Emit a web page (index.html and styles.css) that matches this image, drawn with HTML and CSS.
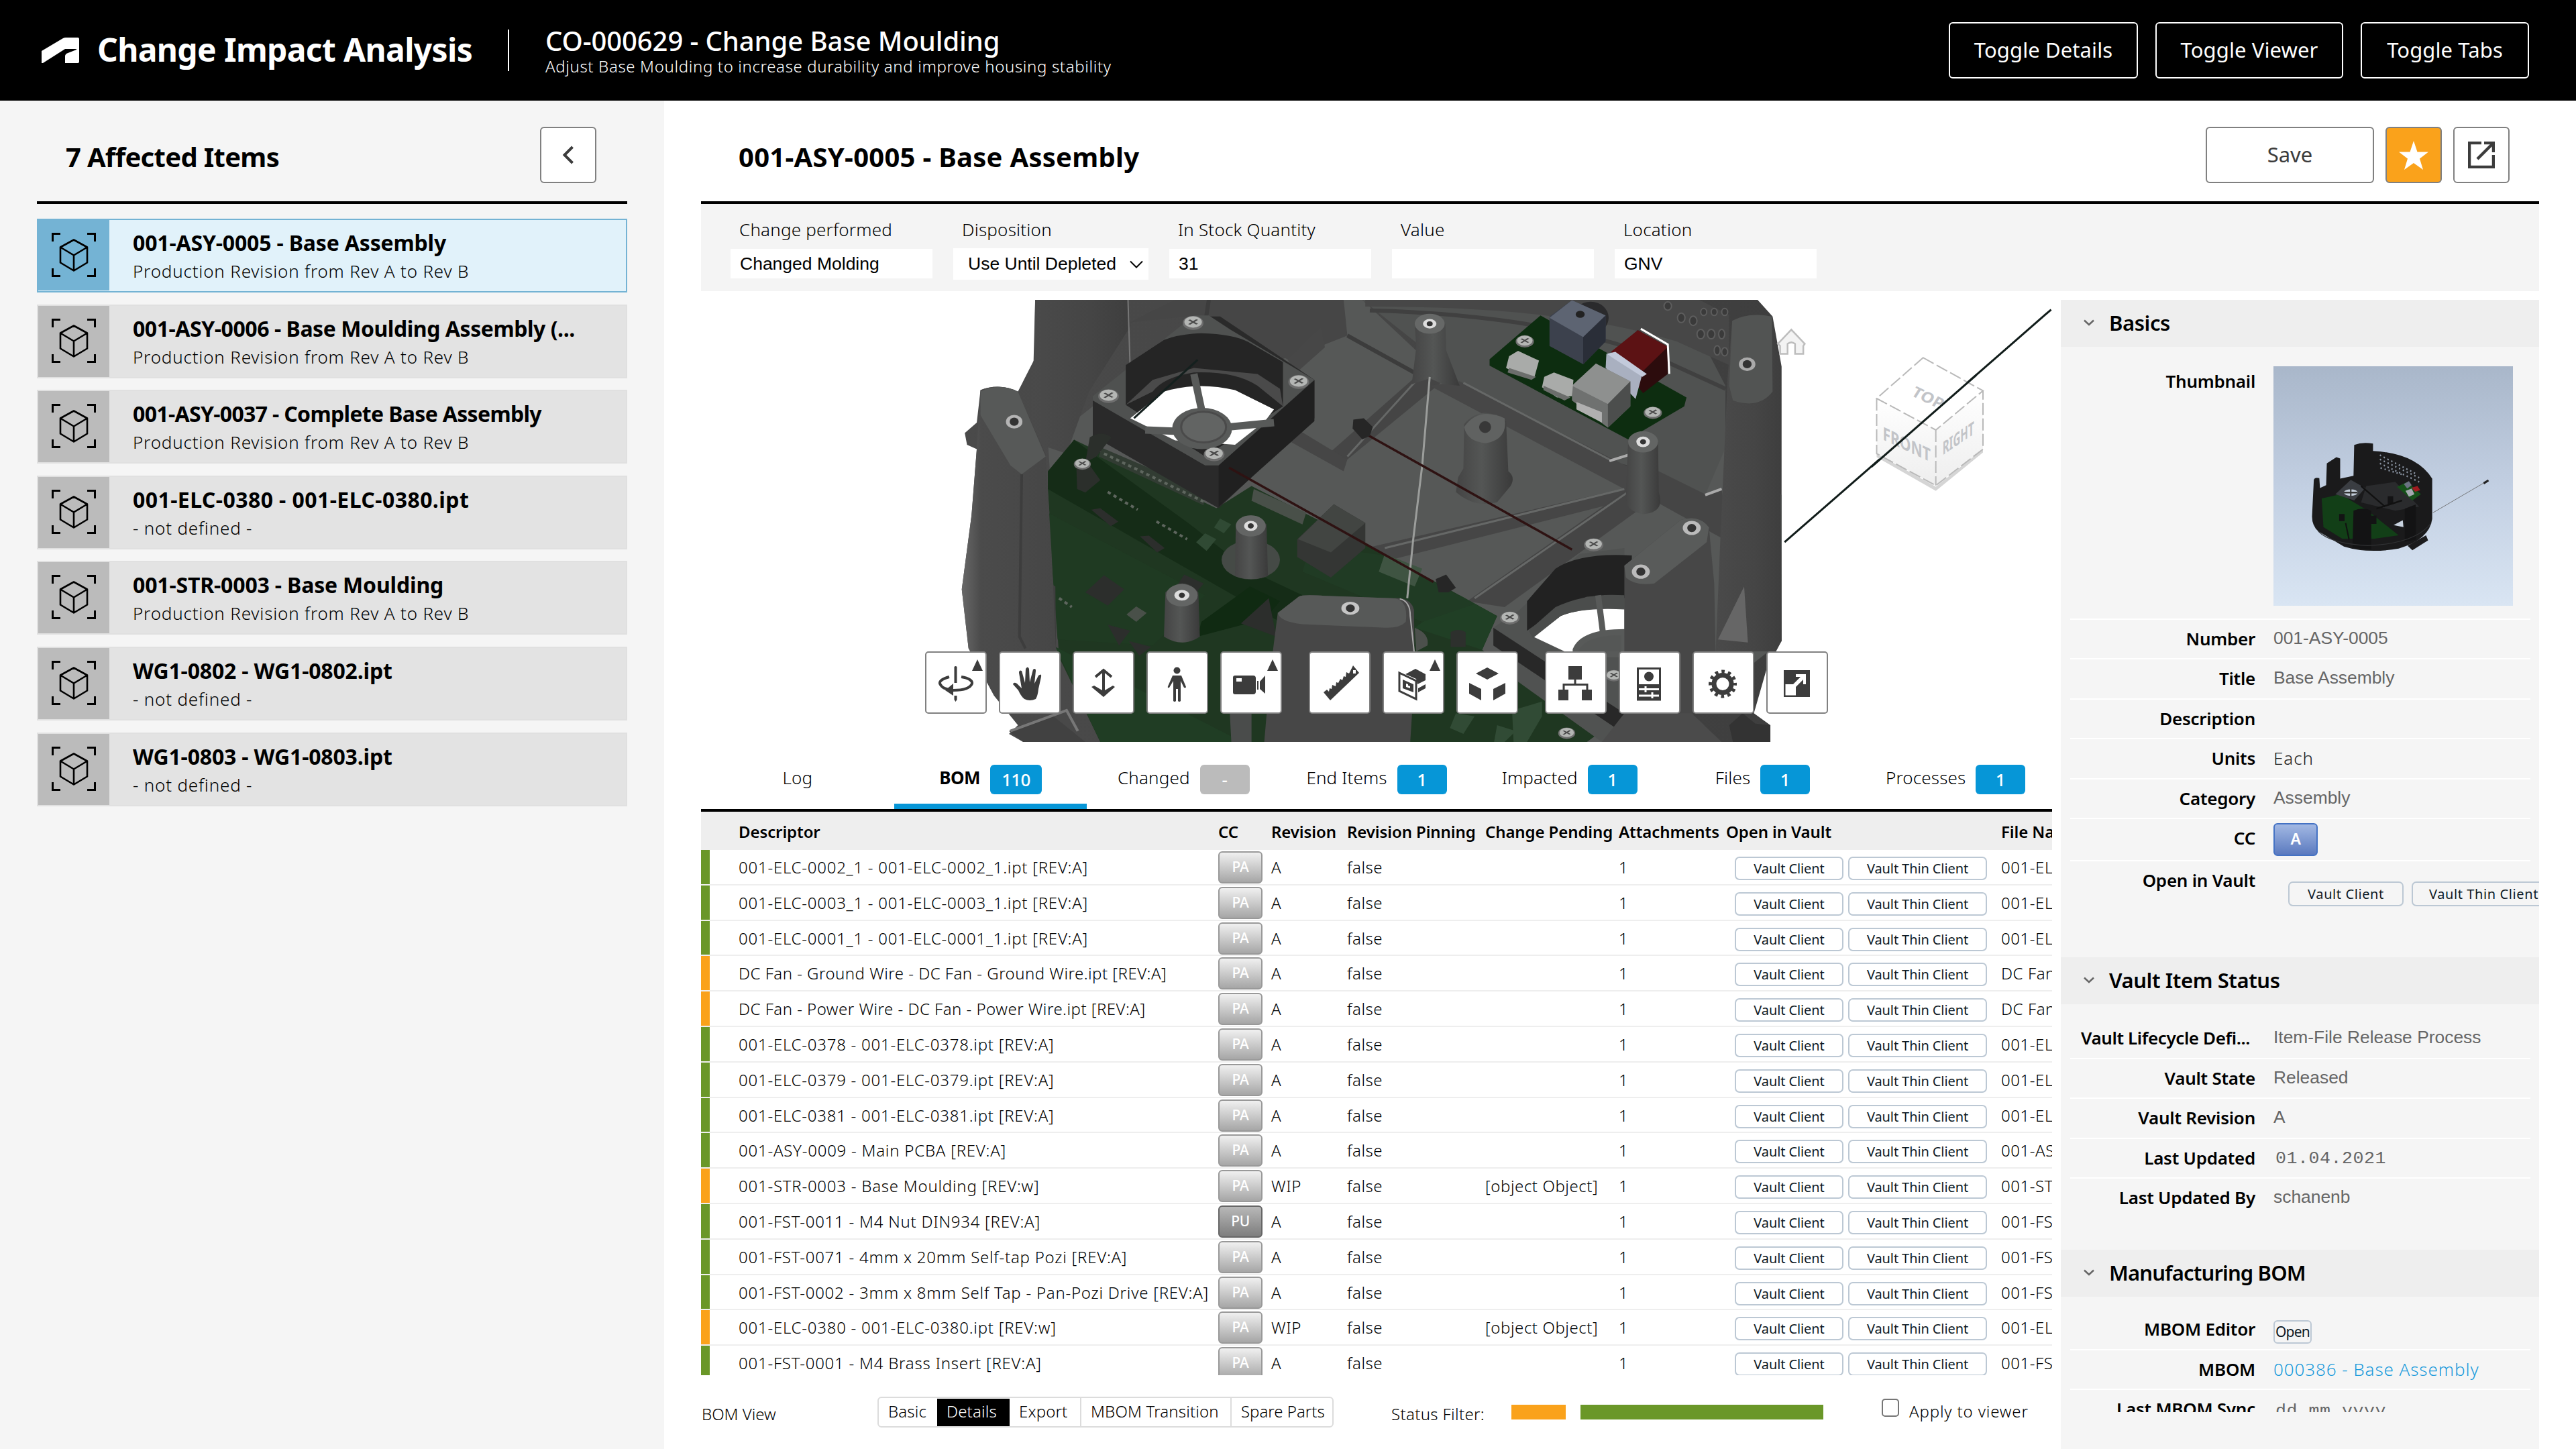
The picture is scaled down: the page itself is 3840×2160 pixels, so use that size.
FILE: index.html
```html
<!DOCTYPE html>
<html lang="en">
<head>
<meta charset="utf-8">
<title>Change Impact Analysis</title>
<link rel="stylesheet" href="styles.css">
</head>
<body>
<svg class="defs" aria-hidden="true">
  <symbol id="item" viewBox="0 0 66 66">
    <path d="M1.5 13V1.500H13M53 1.500H64.500V13M64.500 53V64.500H53M13 64.500H1.500V53" fill="none" stroke="#000" stroke-width="3"/>
    <path d="M33 10.500L53 21.500V44.500L33 56.500L13 44.500V21.500ZM13 21.500L33 33.500L53 21.500M33 33.500V56.500" fill="none" stroke="#000" stroke-width="2.600" stroke-linejoin="round"/>
  </symbol>
  <symbol id="chev" viewBox="0 0 16 10"><path d="M1 1.500L8 8L15 1.500" fill="none" stroke="#666" stroke-width="2.500"/></symbol>
  <symbol id="screw" viewBox="-16 -26 32 52">
    <ellipse rx="13" ry="22" cy="3" fill="#6e6e6e"/><ellipse rx="11" ry="18" fill="#b4b6b4"/><path d="M-5 -7L5 7M5 -8L-5 8" stroke="#4a4a4a" stroke-width="3"/>
  </symbol>
</svg>

<header class="topbar">
  <svg class="logo" viewBox="0 0 56 38"><path d="M0 20L32 1Q34 0 36 0H54Q56 0 56 2V36Q56 38 54 38H35V28Q35 25 38 23.500L52 18Q53 17 51 17H35L2 38H0Z" fill="#fff"/></svg>
  <h1>Change Impact Analysis</h1>
  <div class="order">
    <div class="order-title">CO-000629 - Change Base Moulding</div>
    <div class="order-sub">Adjust Base Moulding to increase durability and improve housing stability</div>
  </div>
  <button class="toggle t1">Toggle Details</button>
  <button class="toggle t2">Toggle Viewer</button>
  <button class="toggle t3">Toggle Tabs</button>
</header>

<div class="body">
<aside class="affected">
  <div class="panel-head">
    <h2 class="tight">7 Affected Items</h2>
    <button class="btn sq"><svg viewBox="0 0 18 28" width="18" height="28"><path d="M15.500 2L3.500 14L15.500 26" fill="none" stroke="#3c3c3c" stroke-width="4"/></svg></button>
  </div>
  <ul class="items">
    <li class="item selected"><span class="ico"><svg><use href="#item"/></svg></span><div><b>001-ASY-0005 - Base Assembly</b><small>Production Revision from Rev A to Rev B</small></div></li>
    <li class="item"><span class="ico"><svg><use href="#item"/></svg></span><div><b>001-ASY-0006 - Base Moulding Assembly (...</b><small>Production Revision from Rev A to Rev B</small></div></li>
    <li class="item"><span class="ico"><svg><use href="#item"/></svg></span><div><b>001-ASY-0037 - Complete Base Assembly</b><small>Production Revision from Rev A to Rev B</small></div></li>
    <li class="item"><span class="ico"><svg><use href="#item"/></svg></span><div><b>001-ELC-0380 - 001-ELC-0380.ipt</b><small>- not defined -</small></div></li>
    <li class="item"><span class="ico"><svg><use href="#item"/></svg></span><div><b>001-STR-0003 - Base Moulding</b><small>Production Revision from Rev A to Rev B</small></div></li>
    <li class="item"><span class="ico"><svg><use href="#item"/></svg></span><div><b>WG1-0802 - WG1-0802.ipt</b><small>- not defined -</small></div></li>
    <li class="item"><span class="ico"><svg><use href="#item"/></svg></span><div><b>WG1-0803 - WG1-0803.ipt</b><small>- not defined -</small></div></li>
  </ul>
</aside>

<main>
  <div class="panel-head wide">
    <h2>001-ASY-0005 - Base Assembly</h2>
    <button class="btn save">Save</button>
    <button class="btn sq star"><svg viewBox="0 0 44 43" width="44" height="43"><path d="M22 0L27.500 16.500H44L31 26.500L36 43L22 33L8 43L13 26.500L0 16.500H16.500Z" fill="#fff"/></svg></button>
    <button class="btn sq"><svg viewBox="0 0 40 40" width="40" height="40"><path d="M20 2H2V38H38V20" fill="none" stroke="#3c3c3c" stroke-width="4.500"/><path d="M24 2H38V16M38 2L14 26" fill="none" stroke="#3c3c3c" stroke-width="4.500"/></svg></button>
  </div>
  <div class="form">
    <div class="field"><label>Change performed</label><span class="input">Changed Molding</span></div>
    <div class="field sel"><label>Disposition</label><span class="input">Use Until Depleted<svg viewBox="0 0 20 12" width="20" height="12"><path d="M1 1.500L10 10.500L19 1.500" fill="none" stroke="#000" stroke-width="2"/></svg></span></div>
    <div class="field"><label>In Stock Quantity</label><span class="input">31</span></div>
    <div class="field"><label>Value</label><span class="input"></span></div>
    <div class="field"><label>Location</label><span class="input">GNV</span></div>
  </div>

  <div class="split">
  <section class="center">
    <div class="viewer">
      <svg class="scene" viewBox="-273.300 39 1804.600 1498" preserveAspectRatio="none">
        <defs>
          <linearGradient id="col" x1="0" x2="1"><stop offset="0" stop-color="#444"/><stop offset=".45" stop-color="#545655"/><stop offset="1" stop-color="#3a3a3a"/></linearGradient>
          <linearGradient id="lobe" x1="0" x2="1"><stop offset="0" stop-color="#686868"/><stop offset=".2" stop-color="#4b4b4b"/><stop offset="1" stop-color="#464646"/></linearGradient>
          <linearGradient id="wall" x1="0" x2="1"><stop offset="0" stop-color="#4a4a4a"/><stop offset=".6" stop-color="#454545"/><stop offset="1" stop-color="#3e3e3e"/></linearGradient>
          <linearGradient id="cube" x1="0" x2="0" y1="0" y2="1"><stop offset="0" stop-color="#fff"/><stop offset="1" stop-color="#ececec"/></linearGradient>
        </defs>
        <path d="M173 39H1138L1158 95L1170 265V1195L1150 1290L1133 1440L1155 1480V1537H157L138 1510L150 1480L118 1380L84 1220L75 1020L88 770L95 545L82 530L79 490L95 455L100 345Q125 320 150 350L172 240Z" fill="url(#wall)"/>
        <!-- floor of the moulding -->
        <path d="M360 39H610L690 230L740 330L940 585L968 680L1095 540L1170 700V1195L1000 1537H700L200 900L190 520L250 400L500 250L555 130L590 160Z" fill="#565857"/>
        <path d="M610 39H950L1040 60L1095 330V540L1068 700L1000 620L940 585L720 310L690 200Z" fill="#505251"/>
        <path d="M614 39H1060L1100 90V260L1030 180Q880 60 614 62Z" fill="#474747"/>
        <path d="M620 75Q850 90 1000 230L1095 340" fill="none" stroke="#404040" stroke-width="6"/>
        <path d="M300 115L360 39H585L590 160L510 240L440 155L395 90Z" fill="#464646"/>
        <path d="M405 39L400 120L440 155M590 160L690 300" fill="none" stroke="#3c3c3c" stroke-width="6"/>
        <!-- ribs -->
        <path d="M690 280L715 320L590 580L565 560Z" fill="#454545"/>
        <path d="M740 315L1000 650L960 680L700 330Z" fill="#474747"/>
        <path d="M615 880L965 675L960 720L640 925Z" fill="#464646"/>
        <path d="M750 1060L965 680L985 740L800 1080Z" fill="#454545"/>
        <path d="M990 600L1070 700L1090 680L1100 860L1000 720Z" fill="#454545"/>
        <path d="M510 240L555 130L560 200L520 290Z" fill="#474747"/>
        <path d="M505 450L590 580L585 620L500 500Z" fill="#464646"/>
        <path d="M940 585L965 565M1068 700L1090 680" stroke="#aaa" stroke-width="4"/>
        <path d="M690 290L590 570M745 320L940 580M640 880L960 680M760 1050L965 690" fill="none" stroke="#666867" stroke-width="3"/>
        <!-- vent holes -->
        <g fill="#3a3a3a" stroke="#5d5d5d" stroke-width="2">
          <ellipse cx="1018" cy="60" rx="5" ry="14"/><ellipse cx="1036" cy="100" rx="5" ry="16"/><ellipse cx="1052" cy="110" rx="5" ry="16"/><ellipse cx="1066" cy="80" rx="4" ry="12"/><ellipse cx="1080" cy="80" rx="4" ry="12"/><ellipse cx="1094" cy="80" rx="4" ry="12"/><ellipse cx="1062" cy="155" rx="5" ry="16"/><ellipse cx="1076" cy="155" rx="5" ry="16"/><ellipse cx="1090" cy="155" rx="4" ry="16"/><ellipse cx="1084" cy="210" rx="4" ry="16"/><ellipse cx="1094" cy="215" rx="4" ry="14"/>
        </g>
        <!-- back pillar -->
        <path d="M173 39H297L300 130L245 350L215 560L168 520Z" fill="url(#wall)"/>
        <path d="M297 39L300 280" stroke="#777" stroke-width="2"/>
        <!-- main board -->
        <path d="M225 513L415 745L462 670L640 900L790 1110L770 1225L830 1330L930 1500L910 1537H260L205 1250L190 680Z" fill="#1f3721"/>
        <path d="M225 513L190 620V680L500 1130L530 1040L480 980L425 890L380 800L250 560Z" fill="#152c17"/>
        <path d="M190 760L400 1040L330 1210L203 1190Z" fill="#1f3a22"/>
        <path d="M395 1130L460 1010L500 1060L480 1120L390 1180Z" fill="#102a12"/>
        <path d="M680 1150L740 1040L790 1110L770 1225Z" fill="#203f25"/>
        <path d="M200 1215L450 1537H260Z" fill="#203d24"/>
        <path d="M540 870L640 905L760 1070L690 1130L530 960Z" fill="#203b24"/>
        <g fill="#2c2e2c">
          <path d="M248 750L260 745L284 790L274 806Z"/><path d="M313 840L325 838L346 880L336 895Z"/><path d="M265 972L292 1020L270 1075L240 1030Z"/><path d="M372 970L398 1000L384 1045L362 1010Z"/><path d="M448 1135L485 1050L495 1180Z"/><path d="M270 1140L300 1160L285 1210Z"/><path d="M298 1195L328 1215L312 1245Z"/>
        </g>
        <g fill="#495049"><path d="M308 1078L322 1100L308 1130L295 1105Z"/><path d="M262 540L400 690L398 735L258 570Z" fill="#323c33"/><path d="M465 680L535 760L530 800L462 720Z"/><path d="M400 830L415 850L402 890L388 860Z" fill="#304a34"/><path d="M640 900L690 950L680 1010L632 960Z" fill="#3f5442"/><path d="M420 780L435 800L425 830L412 810Z" fill="#304a34"/></g>
        <g stroke="#5e665e" stroke-width="4" stroke-dasharray="5 5" fill="none"><path d="M270 690L310 750M335 790L376 850M205 1050L222 1080M265 560L400 725"/></g>
        <g fill="#314b35"><path d="M735 1440L760 1450L745 1510L727 1490Z"/><path d="M790 1480L815 1500L800 1537H786Z"/><path d="M810 1430L850 1400V1450L830 1537H812Z"/></g>
        <path d="M572 732L614 795L614 880L568 980L523 910V850Z" fill="#343634"/><path d="M572 732L614 795L568 895L524 850Z" fill="#424542"/>
        <!-- fan one -->
        <path d="M385 95L420 95L546 310V440L418 745L250 500V375Z" fill="#2a2a2a"/>
        <path d="M546 312V450L418 740V600Z" fill="#202020"/>
        <path d="M385 92L405 92L434 140L546 310L418 600L400 600L250 380V365Z" fill="#4f5150"/>
        <path d="M395 152Q440 155 460 185L504 250V400L400 570L294 395V260L345 175Q365 155 395 152Z" fill="#252525"/>
        <path d="M300 440L345 350Q390 315 440 345L492 410L480 450L440 530L360 515Z" fill="#fff"/>
        <path d="M294 395L330 350Q345 300 385 285Q440 280 470 330L504 400L500 340L470 290L385 270L330 310Z" fill="#4a4a4a"/>
        <g stroke="#585a59" stroke-width="11" fill="none"><path d="M385 290L396 420"/><path d="M430 470L492 455"/><path d="M370 485L320 480"/></g>
        <ellipse cx="396" cy="475" rx="40" ry="70" fill="#585a59"/><ellipse cx="398" cy="470" rx="30" ry="52" fill="#626463" stroke="#4a4a4a" stroke-width="3"/>
        <path d="M390 242L305 440" stroke="#14201e" stroke-width="3"/>
        <use href="#screw" x="367" y="85" width="34" height="58"/><use href="#screw" x="508" y="285" width="34" height="58"/><use href="#screw" x="254" y="333" width="34" height="58"/><use href="#screw" x="395" y="530" width="34" height="58"/>
        <!-- power board -->
        <path d="M848 92L1043 370L1040 400L965 512L780 262V240Z" fill="#0d2d10"/>
        <ellipse cx="915" cy="100" rx="24" ry="55" fill="#2a2a2c"/>
        <path d="M890 40L935 92V180L905 257L860 195V95Z" fill="#3c414d"/><path d="M890 40L935 92L905 165L860 100Z" fill="#5d6472"/><path d="M905 165L935 92V180L905 257Z" fill="#2a2e38"/><ellipse cx="901" cy="88" rx="6" ry="12" fill="#222"/>
        <path d="M978 142L1018 198V290L985 355L942 220Z" fill="#2c0c0d"/><path d="M978 142L1018 198L985 280L942 215Z" fill="#5c1214"/>
        <path d="M982 137L1018 190L1020 290" stroke="#fff" stroke-width="3" fill="none"/>
        <path d="M936 222L984 290L975 375L935 270Z" fill="#a9b0c0"/><path d="M936 222L948 215L990 290L984 300Z" fill="#c3cadb"/>
        <path d="M922 255L968 315V400L938 472L890 380V330Z" fill="#6f7170"/><path d="M922 255L968 315L938 392L890 330Z" fill="#8e908f"/><path d="M938 392L968 315V400L938 472Z" fill="#4c4e4d"/><path d="M896 385L930 420V455L896 410Z" fill="#b0b0b0"/>
        <g fill="#a9aba9"><path d="M818 212L846 245L840 300L825 300L802 270L806 230Z"/><path d="M866 285L892 310L890 365L870 370L850 335L853 300Z"/></g>
        <g fill="#6c6e6c"><path d="M806 270L842 300L836 310L804 285Z"/><path d="M852 330L888 370L880 380L852 345Z"/></g>
        <use href="#screw" x="812" y="152" width="30" height="50"/><use href="#screw" x="983" y="394" width="30" height="50"/>
        <!-- posts -->
        <path d="M680 120Q700 80 721 120L722 210L740 330L718 325L700 305L676 325L682 200Z" fill="url(#col)"/><ellipse cx="700" cy="120" rx="20" ry="34" fill="#666867"/><ellipse cx="700" cy="120" rx="9" ry="16" fill="#ddd"/><ellipse cx="700" cy="120" rx="4" ry="8" fill="#333"/>
        <path d="M746 460Q770 390 802 450L805 620Q815 640 808 670L790 725Q760 745 735 690L738 640L745 610Z" fill="url(#col)"/><path d="M746 470Q765 400 800 440Q805 510 775 525Q750 520 746 470Z" fill="#606261"/><ellipse cx="774" cy="470" rx="8" ry="20" fill="#383838"/>
        <path d="M965 520Q985 450 1005 520L1006 690Q1015 760 985 765Q960 755 962 700Z" fill="url(#col)"/><ellipse cx="985" cy="520" rx="20" ry="36" fill="#636564"/><ellipse cx="985" cy="520" rx="9" ry="18" fill="#ddd"/><ellipse cx="985" cy="520" rx="4" ry="9" fill="#333"/>
        <ellipse cx="461" cy="920" rx="39" ry="66" fill="#454a46"/><path d="M441 800Q461 740 482 800L484 975Q461 995 440 975Z" fill="url(#col)"/><ellipse cx="461" cy="805" rx="20" ry="36" fill="#636564"/><ellipse cx="461" cy="805" rx="9" ry="17" fill="#ddd"/><ellipse cx="461" cy="805" rx="4" ry="9" fill="#333"/>
        <path d="M347 1030Q370 970 391 1030L393 1180Q370 1220 345 1180Z" fill="url(#col)"/><ellipse cx="369" cy="1040" rx="21" ry="38" fill="#636564"/><ellipse cx="369" cy="1040" rx="10" ry="18" fill="#ddd"/><ellipse cx="369" cy="1040" rx="4" ry="9" fill="#333"/>
        <path d="M246 505Q262 480 275 505L255 570L240 590ZM228 600H246L260 650L240 692L229 680Z" fill="#2b2f2b"/><use href="#screw" x="222" y="568" width="28" height="50"/>
        <path d="M175 1010Q187 990 200 1010L201 1250H173Z" fill="url(#col)"/>
        <!-- fan two -->
        <path d="M785 1150L820 1090L900 900L960 880V1537H930L800 1300Z" fill="#505251"/>
        <path d="M785 1150L960 1440V1510L785 1210Z" fill="#282828"/>
        <path d="M830 1160V1060L868 950Q900 895 970 905V1050L910 1045L870 1090Z" fill="#222"/>
        <path d="M838 1180L875 1110Q905 1080 960 1088V1230H880Z" fill="#fff"/>
        <path d="M832 1160L868 1080Q910 1030 960 1040V1085Q905 1080 875 1110L838 1185Z" fill="#4b4d4c"/>
        <path d="M925 1040L932 1180M895 1225Q905 1165 960 1165V1240H895Z" fill="#555756" stroke="#585a59" stroke-width="9"/>
        <use href="#screw" x="903" y="838" width="32" height="56"/><use href="#screw" x="791" y="1086" width="32" height="56"/><use href="#screw" x="932" y="1285" width="28" height="50"/><use href="#screw" x="869" y="1480" width="28" height="50"/>
        <!-- wires -->
        <path d="M700 300L690 600L678 850L670 1050" fill="none" stroke="#9b9d9b" stroke-width="3"/>
        <path d="M432 608L705 995M618 498L890 885" fill="none" stroke="#2e1212" stroke-width="3.500"/>
        <path d="M598 445L612 440L624 470L620 500L610 512L597 475Z" fill="#262626"/><path d="M708 985L722 970L735 1015L725 1030L712 1030Z" fill="#262626"/>
        <!-- outer lobes -->
        <path d="M100 345Q125 320 150 350L187 560L195 900L201 1240V1440H135L84 1220L75 1020L88 770L95 545Z" fill="url(#lobe)"/>
        <path d="M100 350Q125 318 150 350L187 570L155 630L140 600L100 430Z" fill="#575958"/><path d="M155 630L152 1180L160 1220" fill="none" stroke="#3d3d3d" stroke-width="4"/><ellipse cx="145" cy="452" rx="11" ry="23" fill="#b5b5b5"/><ellipse cx="145" cy="452" rx="6" ry="14" fill="#333"/>
        <path d="M1104 110Q1125 80 1157 95L1168 280L1170 1195L1160 1230H1082L1088 860L1098 300Z" fill="url(#wall)"/><path d="M1104 110Q1125 80 1157 95L1158 350Q1140 410 1105 380L1100 330Z" fill="#525453"/><ellipse cx="1124" cy="257" rx="11" ry="23" fill="#aaa"/><ellipse cx="1124" cy="257" rx="6" ry="14" fill="#333"/>
        <path d="M1085 1190L1120 1010L1125 1200Z" fill="#666"/>
        <path d="M960 940L1035 785Q1060 765 1073 810L1080 1000L1082 1250L1050 1460H960V980Z" fill="#474747"/><path d="M960 940L1035 785Q1060 765 1073 810L1070 860L1000 1000Q975 1010 962 980Z" fill="#595b5a"/><g><ellipse cx="1050" cy="812" rx="12" ry="24" fill="#bbb"/><ellipse cx="1050" cy="812" rx="6" ry="14" fill="#333"/><ellipse cx="982" cy="960" rx="12" ry="24" fill="#bbb"/><ellipse cx="982" cy="960" rx="6" ry="14" fill="#333"/></g>
        <path d="M497 1100L525 1045Q530 1036 560 1042L650 1050Q675 1045 679 1090L680 1300L674 1537H479L487 1300Z" fill="#474747"/><path d="M497 1100L525 1045Q530 1036 560 1042L650 1050Q672 1052 668 1130Q660 1152 640 1150L530 1138Q500 1130 497 1100Z" fill="#575958"/><path d="M660 1052Q674 1060 674 1110L680 1250" fill="none" stroke="#aaa" stroke-width="2"/><ellipse cx="594" cy="1084" rx="12" ry="22" fill="#c5c5c5"/><ellipse cx="594" cy="1084" rx="6" ry="13" fill="#333"/>
        <path d="M680 1150Q700 1170 697 1210L682 1230Z" fill="#4c504c"/><path d="M728 1165Q738 1150 748 1165V1215H728Z" fill="#2d302d"/>
        <path d="M138 1500L195 1445L240 1537H157Z" fill="#414141"/><path d="M140 1500L215 1430L230 1500" fill="none" stroke="#777" stroke-width="4"/>
        <path d="M433 1440H462V1537H435Z" fill="#4a4c4b"/><path d="M960 1440H1050L1090 1537H930Z" fill="#4b4b4b"/><path d="M1100 1480L1118 1440L1135 1475L1155 1480V1537H1105Z" fill="#333"/>
        <!-- antenna wire -->
        <path d="M1174 860L1530 72" fill="none" stroke="#111c1a" stroke-width="3"/>
        <!-- home -->
        <path d="M1165 188L1183 140L1201 188L1199 195V222H1188V188Q1183 178 1178 188V222H1168V195Z" fill="#f3f3f3" stroke="#bdbdbd" stroke-width="2.500"/>
        <!-- view cube -->
        <path d="M1297 560L1376 672L1439 545V556L1376 686L1297 572Z" fill="#d5d5d5"/>
        <path d="M1359 235L1439 347L1376 480L1297 373Z" fill="#fff" fill-opacity=".9"/><path d="M1297 373L1376 480V668L1297 560Z" fill="url(#cube)" fill-opacity=".9"/><path d="M1439 347V545L1376 668V480Z" fill="url(#cube)" fill-opacity=".9"/>
        <path d="M1359 235L1439 347L1376 480L1297 373ZM1297 373V560L1376 668L1439 545V347M1376 480V668" fill="none" stroke="#b9b9b9" stroke-width="2" stroke-dasharray="18 5"/>
        <g class="cube-text">
          <text transform="matrix(.7 .84 0 2.270 1305 512)">FRONT</text>
          <text transform="matrix(.5 -.87 0 2.270 1385 566)">RIGHT</text>
          <text transform="matrix(.75 .9 -.4 1.600 1342 362)">TOP</text>
        </g>
        <path d="M1290 605L1430 294" fill="none" stroke="#111c1a" stroke-width="3"/>
      </svg>
      <div class="tools">
        <div class="group">
          <button><svg viewBox="0 0 92 92"><path d="M70 28L78 11L86 28Z"/><path d="M43.500 22Q45.500 20 47.500 22V46H43.500ZM43.500 65H47.500V71L45.500 74L43.500 71Z"/><path d="M36 37Q21 41 22 47Q26 56 40 56M54 37Q71 40 70 47Q66 57 42 57" fill="none" stroke="#3c3c3c" stroke-width="4"/><path d="M42 47L30 57L42 65Z"/></svg></button>
          <button><svg viewBox="0 0 92 92"><path d="M38 70Q33 66 29 57L21 48Q22 44 27 47L34 54L30 31Q30 26 34 28L39 46L40 25Q43 20 45 25L46 45L51 26Q55 23 55 28L53 47L59 35Q64 31 63 37L59 55Q58 65 55 70Q46 74 38 70Z"/></svg></button>
          <button><svg viewBox="0 0 92 92"><path d="M46 28V64M34 37L46 27L58 37" fill="none" stroke="#3c3c3c" stroke-width="4"/><path d="M46 67L28 52L32 50L44 57H48L60 50L63 52Z"/></svg></button>
          <button><svg viewBox="0 0 92 92"><circle cx="45.500" cy="27.500" r="5"/><path d="M39 35H52L59 52Q59 54 56 53L51 43V73Q49 75 47 73V55H44V73Q42 75 40 73V43L34 53Q31 54 32 51Z"/></svg></button>
          <button><svg viewBox="0 0 92 92"><path d="M70 28L78 11L86 28Z"/><path fill-rule="evenodd" d="M22 35H49Q53 35 53 39V59Q53 63 49 63H22Q19 63 19 60V38Q19 35 22 35ZM24 39V44H32V39Z"/><path d="M55 43H57V56H55ZM59 44L67 35V62L59 55Z"/></svg></button>
        </div>
        <div class="group">
          <button><svg viewBox="0 0 92 92"><path fill-rule="evenodd" d="M22 60L27 56L30 59L31 54L34 55L35 49L40 51L41 45L44 46L47 40L50 42L52 36L55 37L56 30L60 32L66 20L75 31L32 72ZM66 27V32H70V27Z"/></svg></button>
          <button><svg viewBox="0 0 92 92"><path d="M70 28L78 11L86 28Z"/><path d="M34 33L49 25L64 33V42L52 48L50 40ZM64 48V54L53 60V54Z"/><path d="M25 31L50 43V70L25 58Z" fill="none" stroke="#3c3c3c" stroke-width="3"/><path fill-rule="evenodd" d="M30 41L46 48V60L30 54ZM35 47V52L41 54V51L38 50V48Z"/></svg></button>
          <button><svg viewBox="0 0 92 92"><path d="M46 23L63 32L46 41L29 32ZM19 46L37 55V72L19 62ZM73 46V62L55 72V55Z"/></svg></button>
        </div>
        <div class="group">
          <button><svg viewBox="0 0 92 92"><path d="M35 21H55V41H35ZM20 56H35V72H20ZM55 56H70V72H55Z"/><path d="M45 41V48M28 56V48.500H63V56" fill="none" stroke="#3c3c3c" stroke-width="3"/></svg></button>
          <button><svg viewBox="0 0 92 92"><path d="M28.500 24.500H61.500V71H28.500Z" fill="none" stroke="#3c3c3c" stroke-width="3"/><circle cx="45" cy="36.500" r="7"/><path d="M27 48H63V72H27Z"/><path d="M30 55.500H60M30 65H60M40 51V60M50 60V69" stroke="#fff" stroke-width="3"/></svg></button>
          <button><svg viewBox="0 0 92 92"><circle cx="45" cy="47.500" r="13" fill="none" stroke="#3c3c3c" stroke-width="7"/><circle cx="45" cy="47.500" r="18.500" fill="none" stroke="#3c3c3c" stroke-width="5" stroke-dasharray="4.700 4.987" stroke-dashoffset="2.350"/></svg></button>
          <button><svg viewBox="0 0 92 92"><path d="M26 27H65V67H26Z"/><path d="M28.500 48H40L51 37H44V33H59V48H55V41L44 52V64.500H28.500Z" fill="#fff"/></svg></button>
        </div>
      </div>
    </div>

    <nav class="tabs">
      <div class="tab">Log</div>
      <div class="tab active">BOM<span class="count">110</span></div>
      <div class="tab">Changed<span class="count none">-</span></div>
      <div class="tab">End Items<span class="count">1</span></div>
      <div class="tab">Impacted<span class="count">1</span></div>
      <div class="tab">Files<span class="count">1</span></div>
      <div class="tab">Processes<span class="count">1</span></div>
    </nav>

    <div class="table">
      <div class="tr th"><i></i><span></span><span>Descriptor</span><span>CC</span><span>Revision</span><span>Revision Pinning</span><span>Change Pending</span><span>Attachments</span><span>Open in Vault</span><span>File Name</span></div>
      <div class="tr"><i></i><span></span><span>001-ELC-0002_1 - 001-ELC-0002_1.ipt [REV:A]</span><em>PA</em><span>A</span><span>false</span><span></span><span>1</span><div class="vb"><button>Vault Client</button><button>Vault Thin Client</button></div><span>001-ELC-0002_1</span></div>
      <div class="tr"><i></i><span></span><span>001-ELC-0003_1 - 001-ELC-0003_1.ipt [REV:A]</span><em>PA</em><span>A</span><span>false</span><span></span><span>1</span><div class="vb"><button>Vault Client</button><button>Vault Thin Client</button></div><span>001-ELC-0003_1</span></div>
      <div class="tr"><i></i><span></span><span>001-ELC-0001_1 - 001-ELC-0001_1.ipt [REV:A]</span><em>PA</em><span>A</span><span>false</span><span></span><span>1</span><div class="vb"><button>Vault Client</button><button>Vault Thin Client</button></div><span>001-ELC-0001_1</span></div>
      <div class="tr warn fan"><i></i><span></span><span>DC Fan - Ground Wire - DC Fan - Ground Wire.ipt [REV:A]</span><em>PA</em><span>A</span><span>false</span><span></span><span>1</span><div class="vb"><button>Vault Client</button><button>Vault Thin Client</button></div><span>DC Fan - Ground</span></div>
      <div class="tr warn fan"><i></i><span></span><span>DC Fan - Power Wire - DC Fan - Power Wire.ipt [REV:A]</span><em>PA</em><span>A</span><span>false</span><span></span><span>1</span><div class="vb"><button>Vault Client</button><button>Vault Thin Client</button></div><span>DC Fan - Power</span></div>
      <div class="tr"><i></i><span></span><span>001-ELC-0378 - 001-ELC-0378.ipt [REV:A]</span><em>PA</em><span>A</span><span>false</span><span></span><span>1</span><div class="vb"><button>Vault Client</button><button>Vault Thin Client</button></div><span>001-ELC-0378</span></div>
      <div class="tr"><i></i><span></span><span>001-ELC-0379 - 001-ELC-0379.ipt [REV:A]</span><em>PA</em><span>A</span><span>false</span><span></span><span>1</span><div class="vb"><button>Vault Client</button><button>Vault Thin Client</button></div><span>001-ELC-0379</span></div>
      <div class="tr"><i></i><span></span><span>001-ELC-0381 - 001-ELC-0381.ipt [REV:A]</span><em>PA</em><span>A</span><span>false</span><span></span><span>1</span><div class="vb"><button>Vault Client</button><button>Vault Thin Client</button></div><span>001-ELC-0381</span></div>
      <div class="tr"><i></i><span></span><span>001-ASY-0009 - Main PCBA [REV:A]</span><em>PA</em><span>A</span><span>false</span><span></span><span>1</span><div class="vb"><button>Vault Client</button><button>Vault Thin Client</button></div><span>001-ASY-0009</span></div>
      <div class="tr warn"><i></i><span></span><span>001-STR-0003 - Base Moulding [REV:w]</span><em>PA</em><span>WIP</span><span>false</span><span>[object Object]</span><span>1</span><div class="vb"><button>Vault Client</button><button>Vault Thin Client</button></div><span>001-STR-0003</span></div>
      <div class="tr"><i></i><span></span><span>001-FST-0011 - M4 Nut DIN934 [REV:A]</span><em class="pu">PU</em><span>A</span><span>false</span><span></span><span>1</span><div class="vb"><button>Vault Client</button><button>Vault Thin Client</button></div><span>001-FST-0011</span></div>
      <div class="tr"><i></i><span></span><span>001-FST-0071 - 4mm x 20mm Self-tap Pozi [REV:A]</span><em>PA</em><span>A</span><span>false</span><span></span><span>1</span><div class="vb"><button>Vault Client</button><button>Vault Thin Client</button></div><span>001-FST-0071</span></div>
      <div class="tr"><i></i><span></span><span>001-FST-0002 - 3mm x 8mm Self Tap - Pan-Pozi Drive [REV:A]</span><em>PA</em><span>A</span><span>false</span><span></span><span>1</span><div class="vb"><button>Vault Client</button><button>Vault Thin Client</button></div><span>001-FST-0002</span></div>
      <div class="tr warn"><i></i><span></span><span>001-ELC-0380 - 001-ELC-0380.ipt [REV:w]</span><em>PA</em><span>WIP</span><span>false</span><span>[object Object]</span><span>1</span><div class="vb"><button>Vault Client</button><button>Vault Thin Client</button></div><span>001-ELC-0380</span></div>
      <div class="tr"><i></i><span></span><span>001-FST-0001 - M4 Brass Insert [REV:A]</span><em>PA</em><span>A</span><span>false</span><span></span><span>1</span><div class="vb"><button>Vault Client</button><button>Vault Thin Client</button></div><span>001-FST-0001</span></div>
    </div>

    <div class="foot">
      <span class="bv">BOM View</span>
      <div class="seg"><span>Basic</span><span class="on">Details</span><span>Export</span><span>MBOM Transition</span><span>Spare Parts</span></div>
      <span class="sf">Status Filter:</span>
      <i class="bar o"></i><i class="bar g"></i>
      <i class="check"></i><span class="av">Apply to viewer</span>
    </div>
  </section>

  <aside class="details">
    <h3><svg><use href="#chev"/></svg>Basics</h3>
    <div class="rows basics">
      <div class="row thumb"><label>Thumbnail</label>
        <svg viewBox="684 189 700 582" preserveAspectRatio="none">
          <defs><linearGradient id="sky" x1="0" x2="0" y1="0" y2="1"><stop offset="0" stop-color="#a9b7ca"/><stop offset=".5" stop-color="#c2cfe2"/><stop offset="1" stop-color="#d9e5f3"/></linearGradient></defs>
          <path d="M684 189H1384V771H684Z" fill="url(#sky)"/>
          <path d="M1150 545L1300 472" stroke="#666" stroke-width="1.500"/><path d="M1297 471L1311 464L1314 468L1300 476Z" fill="#222"/>
          <path d="M975 395Q1100 400 1148 462V560Q1140 610 1050 632Q960 645 890 627L815 590Q795 575 797 550L802 465Q805 458 818 461L820 485L838 478L840 425L868 410L879 413V462L918 455L920 380Q945 372 975 377Z" fill="#1a1a1b"/>
          <path d="M825 510L880 500L960 540L1050 600L980 608L885 608L830 580Z" fill="#123f17"/>
          <path d="M865 500L910 465L952 485L920 515Z" fill="#3a3d42"/><ellipse cx="910" cy="496" rx="20" ry="8" fill="#c4cedb"/><path d="M890 496H930M910 487V505" stroke="#333" stroke-width="4"/>
          <path d="M955 480L1040 470L1110 530L1040 540L940 520Z" fill="#2a2b2d"/>
          <path d="M1045 482L1075 470L1115 500L1090 515Z" fill="#155019"/><path d="M1065 475L1080 468L1088 478L1075 486Z" fill="#6a7282"/><path d="M1088 484L1105 480L1113 490L1098 494Z" fill="#a01a20"/><path d="M1070 492L1088 486L1096 500L1080 506Z" fill="#a4a8b0"/>
          <path d="M1035 575L1062 563L1064 580Z" fill="#c9d3e0"/>
          <path d="M918 540Q945 530 970 540V635L915 630ZM1068 535L1100 525V610L1068 615ZM876 548H892V565H876ZM970 552H985V572H970ZM1018 505H1034V525H1018Z" fill="#131314"/>
          <path d="M895 570L905 610M985 535L1060 515M940 480L1010 530" stroke="#111" stroke-width="4"/>
          <path d="M995 405L1100 450M995 415L1110 460M995 425L1110 470M997 436L1060 452" stroke="#8b95a3" stroke-width="4" stroke-dasharray="4 8"/>
          <path d="M1076 625L1130 600L1136 612L1090 636Z" fill="#1c1c1d"/>
          <path d="M815 590Q850 620 960 625Q1100 620 1145 570" fill="none" stroke="#303133" stroke-width="2"/>
        </svg>
      </div>
      <div class="row r58"><label>Number</label><span>001-ASY-0005</span></div>
      <div class="row"><label>Title</label><span>Base Assembly</span></div>
      <div class="row"><label>Description</label><span></span></div>
      <div class="row"><label>Units</label><span class="noto">Each</span></div>
      <div class="row"><label>Category</label><span>Assembly</span></div>
      <div class="row cc"><label>CC</label><em class="a">A</em></div>
      <div class="row vault"><label>Open in Vault</label><div class="vb big"><button>Vault Client</button><button>Vault Thin Client</button></div></div>
    </div>
    <h3><svg><use href="#chev"/></svg>Vault Item Status</h3>
    <div class="rows status">
      <div class="row"><label class="cut">Vault Lifecycle Defi...</label><span>Item-File Release Process</span></div>
      <div class="row"><label>Vault State</label><span>Released</span></div>
      <div class="row"><label>Vault Revision</label><span>A</span></div>
      <div class="row"><label>Last Updated</label><span class="mono">01.04.2021</span></div>
      <div class="row last"><label>Last Updated By</label><span>schanenb</span></div>
    </div>
    <h3 class="mb"><svg><use href="#chev"/></svg>Manufacturing BOM</h3>
    <div class="rows mbom">
      <div class="row"><label>MBOM Editor</label><button class="open">Open</button></div>
      <div class="row"><label>MBOM</label><a>000386 - Base Assembly</a></div>
      <div class="row last"><label>Last MBOM Sync</label><span class="mono">dd.mm.yyyy</span></div>
    </div>
  </aside>
  </div>
</main>
</div>
</body>
</html>
```
FILE: styles.css
```css
* { box-sizing: border-box; }
body { margin: 0; width: 3840px; height: 2160px; overflow: hidden; background: #fff; color: #000; font-family: "Noto Sans", sans-serif; font-size: 26px; white-space: nowrap; }
h1, h2, h3, ul { margin: 0; padding: 0; list-style: none; }
button { font: inherit; color: inherit; background: none; padding: 0; margin: 0; }
svg { display: block; flex: none; }
.defs { position: absolute; width: 0; height: 0; }

.topbar { height: 150px; background: #000; color: #fff; display: flex; align-items: center; padding: 0 70px 0 62px; }
.logo { width: 56px; height: 38px; }
h1 { font-size: 48px; line-height: 60px; font-weight: 700; letter-spacing: -.65px; margin: 0 0 3px 27px; width: 612px; }
.order { border-left: 2px solid #fff; height: 62px; padding-left: 54px; flex: 1; display: flex; flex-direction: column; justify-content: center; }
.order-title { font-size: 40px; line-height: 46px; font-weight: 500; letter-spacing: -.1px; margin-top: 2px; }
.order-sub { font-size: 24px; line-height: 32px; font-weight: 350; letter-spacing: .65px; margin-top: -1px; }
.toggle { height: 84px; border: 2px solid #fff; border-radius: 6px; font-size: 31px; font-weight: 400; letter-spacing: .1px; padding-bottom: 2px; margin-left: 26px; }
.t1 { width: 282px; } .t2 { width: 280px; } .t3 { width: 251px; }

.body { display: flex; height: 2010px; }
.affected { width: 990px; background: #f5f5f5; padding: 0 55px; }
.panel-head { height: 154px; border-bottom: 4px solid #000; display: flex; align-items: center; padding: 12px 46px 0 43px; }
.affected .panel-head { width: 880px; }
h2 { flex: 1; font-size: 40px; line-height: 48px; font-weight: 700; letter-spacing: .27px; padding-top: 6px; }
h2.tight { letter-spacing: -.7px; }
.btn { height: 84px; border: 2px solid #808080; border-radius: 6px; background: #fff; color: #3c3c3c; font-size: 31px; display: flex; align-items: center; justify-content: center; margin-left: 17px; }
.sq { width: 84px; }
.save { width: 251px; padding-bottom: 2px; }
.star { background: #faa21b; }

.items { padding-top: 22px; display: flex; flex-direction: column; gap: 17.600px; width: 880px; }
.item { height: 110px; display: flex; background: #e3e3e3; border: 2px solid #e0e0e0; }
.item div { padding: 11px 0 0 35px; }
.item b, .item small { display: block; }
.item b { font-size: 32px; line-height: 45px; letter-spacing: -.17px; }
.item:nth-child(2) b { letter-spacing: -.45px; }
.item:nth-child(3) b { letter-spacing: -.67px; }
.item:nth-child(4) b { letter-spacing: .42px; }
.item small { font-size: 26px; line-height: 40px; font-weight: 340; letter-spacing: .81px; }
.ico { width: 106px; background: #bbb; display: flex; align-items: center; justify-content: center; padding-bottom: 2px; }
.ico svg { width: 66px; height: 66px; }
.selected { background: #e1f2fa; border-color: #74b3d4; }
.selected .ico { background: #74b3d4; height: 105px; }

main { flex: 1; padding: 0 55px; }
.wide { padding-left: 56px; padding-right: 44px; }
.form { height: 130px; background: #f4f4f4; display: flex; gap: 31px; padding: 18px 44px 0; }
.field { width: 301px; }
.field label { display: block; height: 49px; line-height: 40px; padding-left: 13px; font-weight: 350; letter-spacing: .2px; }
.input { display: flex; align-items: center; height: 44px; background: #fff; padding-left: 14px; font: 26.500px "Liberation Sans", sans-serif; }
.sel { width: 291px; }
.sel .input { height: 47px; margin-top: -1px; padding: 0 8px 0 22px; justify-content: space-between; }

.split { display: flex; gap: 13px; margin-top: 13px; height: 1713px; }
.center { width: 2014px; display: flex; flex-direction: column; }
.center > * { flex: none; }
.viewer { height: 659px; position: relative; overflow: hidden; }
.scene { width: 2014px; height: 659px; }
.scene path, .scene ellipse { vector-effect: non-scaling-stroke; }
.cube-text { font-size: 27px; font-weight: 700; fill: #c2c4c8; }
.tools { position: absolute; left: 334px; top: 524px; display: flex; gap: 40px; }
.group { display: flex; gap: 18px; }
.tools button { width: 92px; height: 93px; border: 2px solid #808080; border-radius: 5px; background: #fff; }
.tools svg { width: 92px; height: 92px; margin: -2px; fill: #3c3c3c; }

.tabs { height: 104px; border-bottom: 4px solid #000; display: flex; }
.tab { flex: 1; display: flex; align-items: center; justify-content: center; gap: 15px; padding-top: 14px; border-bottom: 8px solid transparent; font-weight: 350; letter-spacing: .15px; }
.tab.active { font-weight: 700; letter-spacing: -.6px; border-color: #0696d7; }
.count { min-width: 74px; height: 44px; line-height: 44px; text-align: center; border-radius: 6px; background: #0696d7; color: #fff; font-weight: 500; margin-top: 6px; }
.active .count { width: 77px; letter-spacing: -.8px; }
.none { background: #bbb; }

.table { height: 840px; overflow: hidden; }
.tr { display: grid; grid-template-columns: 13px 43px 715px 79px 113px 206px 199px 160px 410px 76px; height: 52.800px; line-height: 50px; font-size: 24px; font-weight: 350; letter-spacing: .56px; border-bottom: 2px solid #eee; overflow: hidden; }
.tr > span { padding-top: 1px; }
.tr > span:nth-child(3) { letter-spacing: .76px; }
.fan > span:nth-child(3) { letter-spacing: .48px; }
.tr i { background: #6a9728; }
.warn i { background: #faa21b; }
.th { height: 57px; line-height: 57px; background: #eee; font-weight: 600; }
.th > span, .th > span:nth-child(3) { letter-spacing: -.1px; }
.th i { background: none; }
.tr em, .cc em { width: 66px; height: 48px; margin-top: 2px; border: 2px solid #999; border-radius: 6px; background: linear-gradient(#f0f0f0, #a6a6a6); color: #fff; font-style: normal; font-weight: 500; font-size: 21px; line-height: 42px; text-align: center; letter-spacing: -.3px; }
.tr .pu { background: linear-gradient(#b8b8b8, #7d7d7d); border-color: #666; }
.vb { display: flex; gap: 7px; padding: 10px 0 0 13px; }
.vb button { width: 162px; height: 35px; line-height: 29px; border: 2px solid #bcc8d4; border-radius: 7px; font-size: 20px; font-weight: 380; letter-spacing: -.1px; color: #0e1a26; flex: none; }
.vb button + button { width: 207px; }

.foot { display: flex; align-items: center; padding: 8px 0 0 1px; height: 110px; font-size: 24px; font-weight: 350; }
.bv { width: 262px; padding-bottom: 4px; }
.seg { display: flex; height: 46px; width: 680px; border: 2px solid #dcdcdc; border-radius: 6px; margin-top: -8px; line-height: 40px; }
.seg span { padding-left: 14px; width: 87px; letter-spacing: .15px; }
.seg .on { background: #000; color: #fff; width: 108px; height: 41px; margin-top: 1px; line-height: 38px; }
.seg span:nth-child(3) { width: 105px; }
.seg span:nth-child(4) { width: 224px; border-left: 2px solid #dcdcdc; }
.seg span:nth-child(5) { width: 152px; border-left: 2px solid #dcdcdc; letter-spacing: 0; }
.sf { margin-left: 86px; width: 179px; letter-spacing: .35px; padding-bottom: 4px; }
.bar { height: 22px; margin-top: -8px; }
.o { width: 81px; background: #faa21b; } .g { width: 362px; background: #6a9728; margin-left: 22px; }
.check { width: 26px; height: 27px; border: 2px solid #767676; border-radius: 5px; margin: -22px 15px 0 87px; }
.av { letter-spacing: .85px; margin-top: -11px; }

.details { width: 713px; background: #f5f5f5; overflow: hidden; }
h3 { height: 70px; background: #eee; display: flex; align-items: center; padding-left: 34px; font-size: 31px; font-weight: 600; letter-spacing: -.42px; padding-bottom: 3px; }
h3.mb { letter-spacing: -.85px; }
h3 svg { width: 16px; height: 10px; margin-right: 22px; }
.rows { padding: 0 13px 0 14px; font-family: "Liberation Sans", sans-serif; font-size: 26.400px; color: #666; }
.row { display: flex; height: 59.600px; line-height: 55px; border-bottom: 2px solid #fff; }
.row label { width: 276px; margin-right: 27px; text-align: right; font: 600 26px/57px "Noto Sans", sans-serif; letter-spacing: -.25px; color: #000; }
.row label.cut { padding-right: 8px; letter-spacing: -.4px; }
.row a, .row .noto { font-family: "Noto Sans", sans-serif; font-size: 26px; font-weight: 350; letter-spacing: .92px; color: #1a9bdc; line-height: 57px; }
.row .noto { color: #222; }
.basics { height: 910px; }
.thumb { height: 407px; padding-top: 29px; }
.row.thumb label { line-height: 44px; }
.thumb svg { width: 357px; height: 357px; }
.r58 { height: 59px; }
.cc { height: 63px; }
.cc em { margin-top: 6px; height: 49px; border-color: #4472c4; background: linear-gradient(#a2b8e3, #5b7abf); font-family: "Noto Sans"; font-weight: 600; font-size: 23px; }
.vault { border: 0; width: 800px; }
.vault .vb { padding: 30px 0 0 22px; gap: 12px; font-family: "Noto Sans"; }
.vault button { width: 172px; font-size: 20px; letter-spacing: .6px; height: 37px; }
.vault button + button { width: 215px; }
.status { height: 366px; padding-top: 22px; }
.mono { font-family: "Liberation Mono", monospace; font-size: 26.670px; letter-spacing: .5px; padding-left: 3px; line-height: 59px; }
.mbom { padding-top: 20px; height: 172px; overflow: hidden; }
.row.last { border: 0; }
.open { width: 57px; height: 35px; margin-top: 15px; border: 2px solid #bcc8d4; border-radius: 6px; font: 400 21px/29px "Noto Sans", sans-serif; letter-spacing: -.8px; color: #0e1a26; }
.mbom .mono { padding-top: 3px; }
```
